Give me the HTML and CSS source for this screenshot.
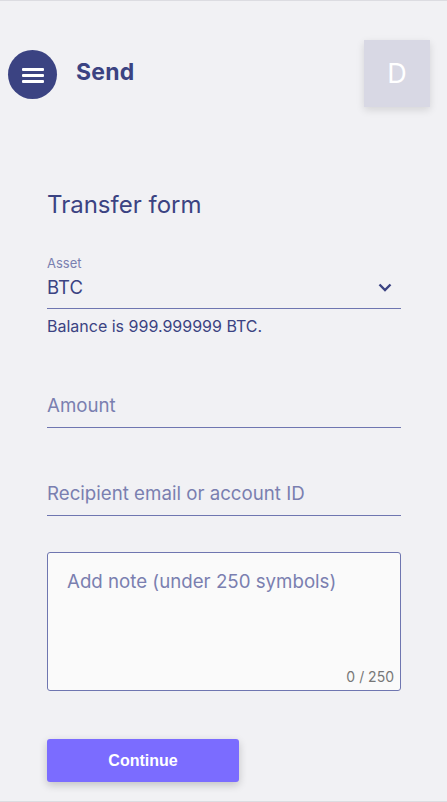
FILE: index.html
```html
<!DOCTYPE html>
<html>
<head>
<meta charset="utf-8">
<link rel="stylesheet" href="styles.css">
</head>
<body>
<div class="page">
  <header class="topbar">
    <div class="left">
      <button class="menu-btn" aria-label="menu">
        <svg width="22" height="16" viewBox="0 0 22 16"><rect x="0" y="1" width="22" height="3" rx="1" fill="#fff"/><rect x="0" y="7" width="22" height="3" rx="1" fill="#fff"/><rect x="0" y="13" width="22" height="3" rx="1" fill="#fff"/></svg>
      </button>
      <h1 class="title">Send</h1>
    </div>
    <div class="avatar">D</div>
  </header>
  <main class="form">
    <h2 class="form-title">Transfer form</h2>
    <div class="select-field">
      <div class="label">Asset</div>
      <div class="select-row">
        <span class="value">BTC</span>
        <svg class="chevron" width="14" height="9" viewBox="0 0 14 9"><path d="M1.5 1.5 L7 7 L12.5 1.5" fill="none" stroke="#3b4382" stroke-width="2.4"/></svg>
      </div>
    </div>
    <div class="hint">Balance is 999.999999 BTC.</div>
    <div class="input-field amount"><span class="placeholder">Amount</span></div>
    <div class="input-field recipient"><span class="placeholder">Recipient email or account ID</span></div>
    <div class="note">
      <span class="placeholder">Add note (under 250 symbols)</span>
      <span class="counter">0 / 250</span>
    </div>
    <button class="continue">Continue</button>
  </main>
</div>
</body>
</html>
```
FILE: styles.css
```css
* { box-sizing: border-box; }
html, body { margin: 0; padding: 0; }
body {
  background: #f1f1f4;
  font-family: "Inter", "Noto Sans", sans-serif;
  color: #3b4382;
  width: 447px;
  height: 802px;
  overflow: hidden;
}
.page {
  height: 802px;
  border-top: 1px solid #dcdce1;
  border-bottom: 1px solid #dcdce1;
}
.topbar {
  display: flex;
  justify-content: space-between;
  align-items: flex-start;
  padding: 39px 17px 0 8px;
}
.left {
  display: flex;
  align-items: center;
  gap: 19px;
  margin-top: 10px;
}
.menu-btn {
  width: 49px;
  height: 49px;
  border-radius: 50%;
  border: none;
  background: #3b4382;
  display: flex;
  align-items: center;
  justify-content: center;
  padding: 0;
}
.title {
  margin: 0 0 5px;
  font-size: 23px;
  font-weight: 700;
  color: #3b4382;
  letter-spacing: 0.2px;
}
.avatar {
  width: 66px;
  height: 67px;
  background: #d8d8e4;
  color: #fff;
  font-size: 27px;
  display: flex;
  align-items: center;
  justify-content: center;
  box-shadow: 0 3px 8px rgba(0,0,0,0.12);
}
.form {
  padding: 83px 46px 0 47px;
  display: flex;
  flex-direction: column;
}
.form-title {
  margin: 0;
  font-size: 24px;
  font-weight: 400;
  line-height: 30px;
}
.select-field {
  margin-top: 35px;
  border-bottom: 1px solid #6f76b0;
  padding-bottom: 10px;
}
.label {
  font-size: 13px;
  color: #7a7fb0;
  line-height: 16px;
}
.select-row {
  display: flex;
  justify-content: space-between;
  align-items: center;
  margin-top: 5px;
}
.value {
  font-size: 18.5px;
  line-height: 22px;
}
.chevron { margin-right: 9px; }
.hint {
  font-size: 16px;
  margin-top: 8px;
  line-height: 18px;
}
.input-field {
  border-bottom: 1px solid #6f76b0;
  padding-bottom: 10px;
}
.amount { margin-top: 60px; }
.recipient { margin-top: 55px; }
.placeholder {
  font-size: 18.7px;
  line-height: 22px;
  color: #7a7fb0;
}
.note {
  margin-top: 36px;
  height: 139px;
  border: 1px solid #6f76b0;
  border-radius: 3px;
  background: #fafafa;
  padding: 18px 19px;
  position: relative;
}
.counter {
  position: absolute;
  right: 6px;
  bottom: 5px;
  font-size: 14px;
  color: #777;
}
.continue {
  margin-top: 48px;
  width: 192px;
  height: 43px;
  border: none;
  border-radius: 3px;
  background: #7b6cff;
  color: #fff;
  font-family: "Liberation Sans", Arial, sans-serif;
  font-weight: 700;
  font-size: 16px;
  box-shadow: 0 3px 8px rgba(0,0,0,0.2);
}
```
